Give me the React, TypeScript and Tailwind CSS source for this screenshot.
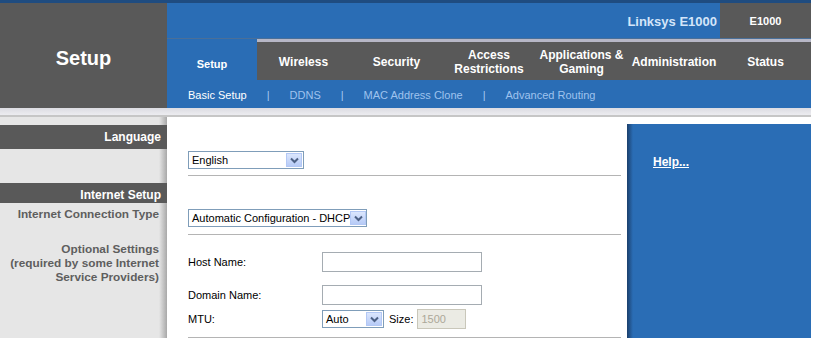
import React from "react";

const tabs = [
  { label: "Setup", active: true },
  { label: "Wireless" },
  { label: "Security" },
  { label: "Access\nRestrictions" },
  { label: "Applications &\nGaming" },
  { label: "Administration" },
  { label: "Status" },
];

const subItems = ["Basic Setup", "DDNS", "MAC Address Clone", "Advanced Routing"];

function Arrow() {
  return (
    <span className="flex h-full w-[16px] shrink-0 items-center justify-center border border-[#b3c8f5] bg-[linear-gradient(to_bottom,#dbe6fd,#b7cbf7)]">
      <svg width="9" height="7" viewBox="0 0 9 7">
        <path d="M1 1.5 L4.5 5 L8 1.5" fill="none" stroke="#4d6185" strokeWidth="2" />
      </svg>
    </span>
  );
}

function FakeSelect({ value, width }: { value: string; width: string }) {
  return (
    <div className={`flex h-[18px] items-stretch border border-[#7f9db9] bg-white p-[1px] ${width}`}>
      <span className="flex-1 whitespace-nowrap pl-[2px] text-[11px] leading-[14px] text-black">{value}</span>
      <Arrow />
    </div>
  );
}

function Divider() {
  return <div className="h-px w-full bg-[#b4b4b4]" />;
}

export default function App() {
  return (
    <div className="min-h-[339px] w-[826px] bg-white font-['Liberation_Sans',Arial,sans-serif]">
      <div className="w-[811px]">
        <div className="h-[3px] bg-[#1f4c80]" />

        {/* header */}
        <div className="flex">
          <div className="flex h-[105px] w-[167px] items-center justify-center bg-[#595959] pt-[4px]">
            <span className="text-[20px] font-bold text-white">Setup</span>
          </div>
          <div className="flex w-[644px] flex-col">
            <div className="flex h-[35px]">
              <div className="flex flex-1 items-center justify-end bg-[#2a6db5] pr-[3px] pt-[2px]">
                <span className="text-[13px] font-bold text-[#d4e5f9]">Linksys E1000</span>
              </div>
              <div className="flex w-[91px] items-center justify-center bg-[#595959] pt-[2px]">
                <span className="text-[11px] font-bold text-white">E1000</span>
              </div>
            </div>
            <div className="grid h-[42px] grid-cols-[90px_93px_93px_92px_93px_92px_91px] border-t border-[#4a6f98]">
              {tabs.map((t) => (
                <div
                  key={t.label}
                  className={
                    t.active
                      ? "flex items-center justify-center bg-[#2a6db5] pt-[8px]"
                      : "flex items-center justify-center border-t-[3px] border-[#b7b7c6] bg-[#595959] pt-[2px]"
                  }
                >
                  <span
                    className={`whitespace-pre-line text-center font-bold leading-[14px] text-white ${
                      t.active ? "text-[11px]" : "text-[12px]"
                    }`}
                  >
                    {t.label}
                  </span>
                </div>
              ))}
            </div>
            <div className="flex h-[28px] items-center gap-[20px] bg-[#2a6db5] pl-[21px] pt-[3px] text-[11px]">
              {subItems.map((s, i) => (
                <React.Fragment key={s}>
                  {i > 0 && <span className="text-[#a8cbf2]">|</span>}
                  <span className={i === 0 ? "text-white" : "text-[#9fc3ee]"}>{s}</span>
                </React.Fragment>
              ))}
            </div>
          </div>
        </div>

        <div className="h-[9px] border-b-2 border-[#c6c6c6] bg-[linear-gradient(to_bottom,#dcdce2,#ececf0)]" />

        {/* body */}
        <div className="flex">
          <div className="flex w-[167px] flex-col bg-[linear-gradient(to_right,#e6e6e6_159px,#a8a8a8_167px)] pb-[10px] text-right">
            <div className="mt-[8px] flex h-[24px] items-center justify-end bg-[#595959] pr-[6px]">
              <span className="text-[12px] font-bold text-white">Language</span>
            </div>
            <div className="mt-[34px] flex h-[20px] items-center justify-end bg-[#595959] pr-[6px] pt-[3px]">
              <span className="text-[12px] font-bold text-white">Internet Setup</span>
            </div>
            <div className="mt-[4px] whitespace-nowrap pr-[8px] text-[11.8px] font-bold leading-[14px] text-[#5e5e5e]">
              Internet Connection Type
            </div>
            <div className="mt-[21px] whitespace-nowrap pr-[8px] text-[11.8px] font-bold leading-[14px] text-[#5e5e5e]">
              Optional Settings
              <br />
              (required by some Internet
              <br />
              Service Providers)
            </div>
          </div>

          <div className="flex w-[460px] flex-col pl-[21px] pr-[6px] pt-[34px] text-[11px] text-black">
            <FakeSelect value="English" width="w-[116px]" />
            <div className="mt-[6px]">
              <Divider />
            </div>
            <div className="mt-[33px]">
              <FakeSelect value="Automatic Configuration - DHCP" width="w-[179px]" />
            </div>
            <div className="mt-[7px]">
              <Divider />
            </div>
            <div className="mt-[17px] flex items-center">
              <span className="w-[134px]">Host Name:</span>
              <div className="h-[20px] w-[160px] border border-[#a5acb2] bg-white" />
            </div>
            <div className="mt-[13px] flex items-center">
              <span className="w-[134px]">Domain Name:</span>
              <div className="h-[20px] w-[160px] border border-[#a5acb2] bg-white" />
            </div>
            <div className="mt-[4px] flex items-center">
              <span className="w-[134px]">MTU:</span>
              <FakeSelect value="Auto" width="w-[62px]" />
              <span className="ml-[5px] mr-[4px]">Size:</span>
              <div className="flex h-[20px] w-[49px] items-center border border-[#c9c7ba] bg-[#ebebe4] pl-[3px] text-[#aca899]">
                1500
              </div>
            </div>
            <div className="mt-[8px]">
              <Divider />
            </div>
          </div>

          <div className="mt-[7px] flex-1 bg-[linear-gradient(to_right,#1b3f6c,#2a6db5_6px)] pl-[26px] pt-[25px]">
            <span className="text-[12px] font-bold text-white underline">Help...</span>
          </div>
        </div>
      </div>
    </div>
  );
}
